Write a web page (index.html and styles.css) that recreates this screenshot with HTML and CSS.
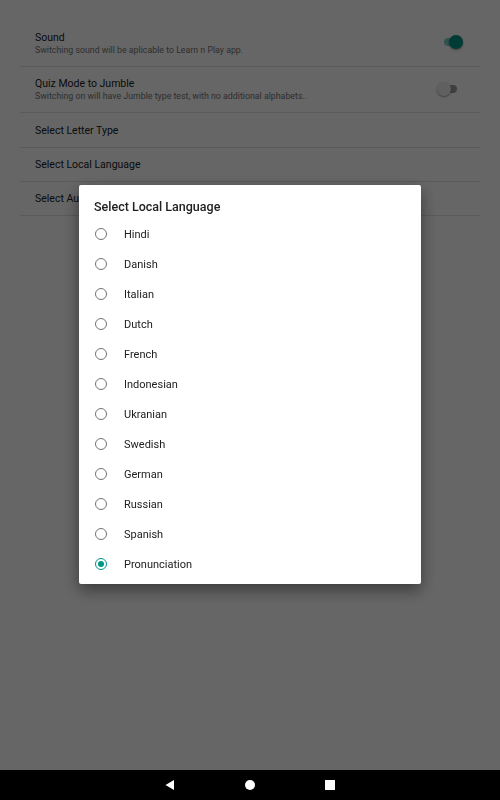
FILE: index.html
```html
<!DOCTYPE html>
<html>
<head>
<meta charset="utf-8">
<link rel="stylesheet" href="styles.css">
</head>
<body>
<div class="screen">
  <div class="settings">
    <div class="row row-tall">
      <div class="texts">
        <div class="title">Sound</div>
        <div class="sub">Switching sound will be aplicable to Learn n Play app.</div>
      </div>
      <div class="switch on"><span class="track"></span><span class="thumb"></span></div>
    </div>
    <div class="row row-tall">
      <div class="texts">
        <div class="title">Quiz Mode to Jumble</div>
        <div class="sub">Switching on will have Jumble type test, with no additional alphabets..</div>
      </div>
      <div class="switch off"><span class="track"></span><span class="thumb"></span></div>
    </div>
    <div class="row row-first"><div class="title">Select Letter Type</div></div>
    <div class="row"><div class="title">Select Local Language</div></div>
    <div class="row"><div class="title">Select Audio Language</div></div>
  </div>
  <div class="navbar">
    <svg width="12" height="12" viewBox="0 0 12 12"><path d="M10 1 L10 11 L1.5 6 Z" fill="#fff"/></svg>
    <svg width="12" height="12" viewBox="0 0 12 12"><circle cx="6" cy="6" r="5" fill="#fff"/></svg>
    <svg width="12" height="12" viewBox="0 0 12 12"><rect x="1" y="1" width="10" height="10" fill="#fff"/></svg>
  </div>
</div>
<div class="scrim"></div>
<div class="dialog">
  <div class="dialog-title">Select Local Language</div>
  <ul class="options">
    <li class="opt"><span class="radio"></span>Hindi</li>
    <li class="opt"><span class="radio"></span>Danish</li>
    <li class="opt"><span class="radio"></span>Italian</li>
    <li class="opt"><span class="radio"></span>Dutch</li>
    <li class="opt"><span class="radio"></span>French</li>
    <li class="opt"><span class="radio"></span>Indonesian</li>
    <li class="opt"><span class="radio"></span>Ukranian</li>
    <li class="opt"><span class="radio"></span>Swedish</li>
    <li class="opt"><span class="radio"></span>German</li>
    <li class="opt"><span class="radio"></span>Russian</li>
    <li class="opt"><span class="radio"></span>Spanish</li>
    <li class="opt"><span class="radio checked"></span>Pronunciation</li>
  </ul>
</div>
</body>
</html>
```
FILE: styles.css
```css
* { box-sizing: border-box; }
html, body { margin: 0; padding: 0; }
body {
  width: 500px;
  height: 800px;
  font-family: Roboto, "Noto Sans", sans-serif;
  background: #fff;
  overflow: hidden;
}
.screen {
  width: 500px;
  height: 800px;
  display: flex;
  flex-direction: column;
}
.settings {
  flex: 1;
  padding: 21px 20px 0 20px;
}
.row {
  height: 34px;
  border-bottom: 1px solid #e0e0e0;
  display: flex;
  align-items: center;
  padding: 0 15px;
}
.row-first { height: 35px; }
.row-tall { height: 46px; justify-content: space-between; padding-bottom: 1px; }
.title { font-size: 10.5px; color: #212121; line-height: 13px; }
.sub { font-size: 8.8px; color: #757575; line-height: 12px; }
.switch { position: relative; width: 22px; height: 14px; }
.switch .track {
  position: absolute; left: 3px; top: 3px; width: 17px; height: 8px; border-radius: 4px;
}
.switch .thumb {
  position: absolute; top: 0; width: 14px; height: 14px; border-radius: 50%;
  box-shadow: 0 1px 2px rgba(0,0,0,0.4);
}
.switch.on { margin-right: 2px; margin-bottom: 2px; }
.switch.on .track { background: #80cbc4; }
.switch.on .thumb { right: 0; background: #009688; }
.switch.off { margin-right: 6px; }
.switch.off .track { background: #9e9e9e; }
.switch.off .thumb { left: 0; background: #f1f1f1; }
.navbar {
  height: 30px;
  background: #000;
  display: flex;
  justify-content: center;
  align-items: center;
  gap: 68px;
}
.scrim {
  position: fixed;
  left: 0; top: 0; width: 500px; height: 770px;
  background: rgba(0,0,0,0.6);
}
.dialog {
  position: fixed;
  left: 79px; top: 185px;
  width: 342px; height: 399px;
  background: #fff;
  border-radius: 2px;
  box-shadow: 0 6px 16px rgba(0,0,0,0.45);
  padding: 14px 0 0 0;
}
.dialog-title {
  font-size: 12.5px;
  font-weight: 500;
  color: #212121;
  padding-left: 15px;
  line-height: 15px;
}
.options { list-style: none; margin: 5px 0 0 0; padding: 0; }
.opt {
  height: 30px;
  display: flex;
  align-items: center;
  font-size: 11px;
  color: #212121;
  padding-left: 16px;
}
.radio {
  width: 12px; height: 12px;
  border: 1.5px solid #737373;
  border-radius: 50%;
  margin-right: 17px;
  position: relative;
  flex: none;
}
.radio.checked { border-color: #009688; }
.radio.checked::after {
  content: "";
  position: absolute;
  left: 1.5px; top: 1.5px; width: 6px; height: 6px;
  border-radius: 50%;
  background: #009688;
}
```
